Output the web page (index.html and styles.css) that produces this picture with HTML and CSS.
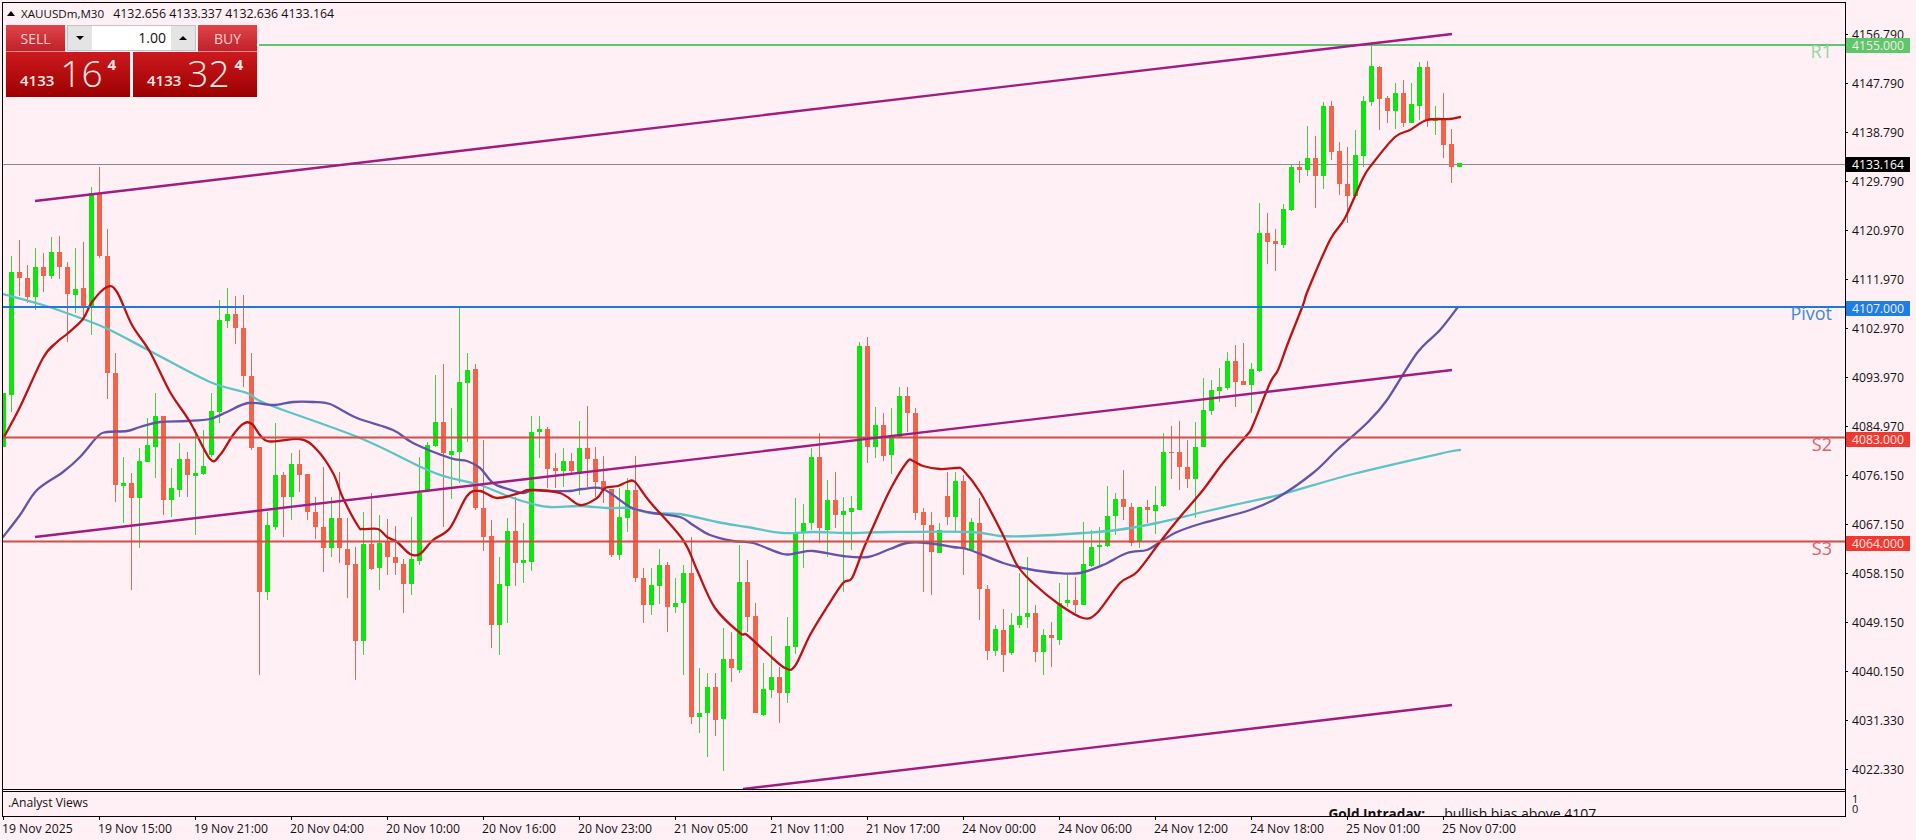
FILE: index.html
```html
<!DOCTYPE html>
<html lang="en">
<head>
  <meta charset="UTF-8">
  <title>XAUUSDm,M30</title>
  <link rel="stylesheet" href="styles.css">
</head>
<body>
  <div class="window">
    <div class="panes">
      <div class="main-pane">
        <svg class="chart" width="1842" height="786" viewBox="3 3 1842 786">
          <line class="level level-last" x1="3" y1="164.5" x2="1845" y2="164.5"/>
          <g id="candles"></g>
          <g id="averages"></g>
          <line class="level level-r1" x1="259" y1="45" x2="1845" y2="45"/>
          <line class="level level-pivot" x1="3" y1="307" x2="1845" y2="307"/>
          <line class="level level-s2" x1="3" y1="437.5" x2="1845" y2="437.5"/>
          <line class="level level-s3" x1="3" y1="541.5" x2="1845" y2="541.5"/>
          <line class="channel" x1="35" y1="201" x2="1452" y2="34"/>
          <line class="channel" x1="35" y1="537" x2="1452" y2="370"/>
          <line class="channel" x1="743" y1="789" x2="1452" y2="705"/>
          <text class="level-name name-r1" x="1832" y="57.5">R1</text>
          <text class="level-name name-pivot" x="1832" y="320">Pivot</text>
          <text class="level-name name-s2" x="1832" y="451">S2</text>
          <text class="level-name name-s3" x="1832" y="555">S3</text>
        </svg>

        <div class="chart-title">
          <span class="title-arrow"></span>
          <span class="title-symbol">XAUUSDm,M30</span>
          <span class="title-prices">4132.656 4133.337 4132.636 4133.164</span>
        </div>

        <div class="trade-panel">
          <div class="trade-top">
            <div class="trade-btn">SELL</div>
            <div class="lot-box">
              <div class="lot-step"><span class="arrow-down"></span></div>
              <div class="lot-value">1.00</div>
              <div class="lot-step"><span class="arrow-up"></span></div>
            </div>
            <div class="trade-btn">BUY</div>
          </div>
          <div class="quotes">
            <div class="quote">
              <span class="quote-base">4133</span>
              <span class="quote-big">16</span>
              <span class="quote-point">4</span>
            </div>
            <div class="quote">
              <span class="quote-base">4133</span>
              <span class="quote-big">32</span>
              <span class="quote-point">4</span>
            </div>
          </div>
        </div>
      </div>

      <div class="sub-pane">
        <div class="sub-name">.Analyst Views</div>
        <div class="headline">
          <span class="headline-title">Gold Intraday:</span>
          <span class="headline-text">bullish bias above 4107.</span>
        </div>
      </div>
    </div>

    <div class="price-axis">
      <div class="tick">4156.790</div>
      <div class="tick">4147.790</div>
      <div class="tick">4138.790</div>
      <div class="tick">4129.790</div>
      <div class="tick">4120.970</div>
      <div class="tick">4111.970</div>
      <div class="tick">4102.970</div>
      <div class="tick">4093.970</div>
      <div class="tick">4084.970</div>
      <div class="tick">4076.150</div>
      <div class="tick">4067.150</div>
      <div class="tick">4058.150</div>
      <div class="tick">4049.150</div>
      <div class="tick">4040.150</div>
      <div class="tick">4031.330</div>
      <div class="tick">4022.330</div>
      <div class="sub-tick">1</div>
      <div class="sub-tick">0</div>

      <div class="price-tag tag-r1">4155.000</div>
      <div class="price-tag tag-last">4133.164</div>
      <div class="price-tag tag-pivot">4107.000</div>
      <div class="price-tag tag-s2">4083.000</div>
      <div class="price-tag tag-s3">4064.000</div>
    </div>
  </div>

  <div class="time-axis">
    <div class="time">19 Nov 2025</div>
    <div class="time">19 Nov 15:00</div>
    <div class="time">19 Nov 21:00</div>
    <div class="time">20 Nov 04:00</div>
    <div class="time">20 Nov 10:00</div>
    <div class="time">20 Nov 16:00</div>
    <div class="time">20 Nov 23:00</div>
    <div class="time">21 Nov 05:00</div>
    <div class="time">21 Nov 11:00</div>
    <div class="time">21 Nov 17:00</div>
    <div class="time">24 Nov 00:00</div>
    <div class="time">24 Nov 06:00</div>
    <div class="time">24 Nov 12:00</div>
    <div class="time">24 Nov 18:00</div>
    <div class="time">25 Nov 01:00</div>
    <div class="time">25 Nov 07:00</div>
  </div>

  <script src="chart.js"></script>
</body>
</html>
```

FILE: styles.css
```css
* {
  margin: 0;
  padding: 0;
  box-sizing: border-box;
}

body {
  width: 1916px;
  height: 840px;
  padding: 2px 0 0 2px;
  overflow: hidden;
  background: #fff0f5;
  color: #111;
  font-family: "Open Sans", "Liberation Sans", sans-serif;
  font-size: 12.2px;
}

.window {
  display: flex;
  height: 815px;
}

.panes {
  width: 1844px;
  height: 815px;
  border-left: 1px solid #000;
  border-right: 1px solid #000;
}

.main-pane {
  position: relative;
  height: 788px;
  border-top: 1px solid #000;
  border-bottom: 1px solid #000;
}

.chart {
  display: block;
}

.wick-up { fill: #3fd13f; }
.wick-down { fill: #d0705c; }
.body-up { fill: #0ce60c; }
.body-down { fill: #f4624a; }

.ma {
  fill: none;
  stroke-linejoin: round;
  stroke-linecap: round;
}

.ma-fast { stroke: #b81414; stroke-width: 2.3; }
.ma-mid { stroke: #6254a8; stroke-width: 2.3; }
.ma-slow { stroke: #5cc4c4; stroke-width: 2.3; }

.level { stroke-width: 2; }
.level-last { stroke: #8a8a8a; stroke-width: 1; }
.level-r1 { stroke: #5fc472; }
.level-pivot { stroke: #1f78d6; }
.level-s2, .level-s3 { stroke: #cc5048; }

.channel {
  stroke: #a01c80;
  stroke-width: 2.4;
}

.level-name {
  font-size: 18px;
  text-anchor: end;
}

.name-r1 { fill: #8ed89c; }
.name-pivot { fill: #3f88d8; }
.name-s2, .name-s3 { fill: #d8626a; }

.chart-title {
  position: absolute;
  top: 1px;
  left: 4px;
  display: flex;
  align-items: center;
  height: 18px;
  white-space: nowrap;
}

.title-arrow {
  width: 0;
  height: 0;
  margin-right: 6px;
  border-left: 4px solid transparent;
  border-right: 4px solid transparent;
  border-bottom: 5px solid #000;
}

.title-symbol {
  margin-right: 9px;
  font-size: 11.6px;
}

.title-prices {
  font-size: 12.4px;
}

.trade-panel {
  position: absolute;
  top: 22px;
  left: 3px;
  width: 251px;
}

.trade-top {
  display: flex;
  justify-content: space-between;
  height: 27px;
}

.trade-btn {
  width: 59px;
  line-height: 27px;
  text-align: center;
  color: #ffd4d4;
  font-size: 14px;
  background: linear-gradient(#e04448, #c0202a);
  border-bottom: 1px solid #e88a8a;
}

.lot-box {
  display: flex;
  width: 129px;
  height: 26px;
  background: #fff;
  border: 1px solid #c4c4c4;
}

.lot-step {
  display: flex;
  align-items: center;
  justify-content: center;
  width: 24px;
  background: #e4e4e4;
}

.lot-value {
  flex: 1;
  padding-right: 5px;
  text-align: right;
  line-height: 24px;
  font-size: 14px;
}

.arrow-down, .arrow-up {
  width: 0;
  height: 0;
  border-left: 4px solid transparent;
  border-right: 4px solid transparent;
}

.arrow-down { border-top: 4px solid #000; }
.arrow-up { border-bottom: 4px solid #000; }

.quotes {
  display: flex;
  justify-content: space-between;
  height: 45px;
}

.quote {
  display: flex;
  align-items: flex-start;
  width: 124px;
  padding-left: 14px;
  color: #ffe8e8;
  background: linear-gradient(#cc1a1e, #9c0000);
}

.quote-base {
  margin-top: 18px;
  font-size: 15px;
  font-weight: 600;
}

.quote-big {
  margin: -2px 0 0 6px;
  font-size: 37px;
  font-weight: 300;
  line-height: 46px;
}

.quote-point {
  margin: 2px 0 0 5px;
  font-size: 15px;
  font-weight: 700;
}

.sub-pane {
  display: flex;
  height: 26px;
  margin-top: 1px;
  overflow: hidden;
  border-top: 1px solid #000;
  border-bottom: 1px solid #000;
}

.sub-name {
  margin-left: 5px;
  line-height: 22px;
}

.headline {
  display: flex;
  gap: 19px;
  margin: 12px 245px 0 auto;
  white-space: nowrap;
}

.headline-title {
  font-size: 13.6px;
  font-weight: 700;
}

.headline-text {
  font-size: 14px;
}

.price-axis {
  position: relative;
  width: 70px;
  padding-top: 8px;
}

.tick {
  display: flex;
  align-items: center;
  height: 49px;
}

.tick::before {
  content: "";
  width: 2px;
  height: 1px;
  margin-right: 4px;
  background: #000;
}

.sub-tick {
  height: 10px;
  padding-left: 6px;
  line-height: 10px;
  font-size: 11px;
}

.price-tag {
  position: absolute;
  left: 0;
  width: 64px;
  height: 15px;
  padding-left: 6px;
  line-height: 15px;
  color: #ffe8e8;
}

.tag-r1 { top: 36px; background: #5cc86c; }
.tag-last { top: 155px; background: #000; color: #fff; }
.tag-pivot { top: 299px; background: #1a80e8; }
.tag-s2 { top: 430px; background: #f03a30; }
.tag-s3 { top: 534px; background: #f03a30; }

.time-axis {
  display: flex;
  white-space: nowrap;
}

.time {
  flex: 0 0 96px;
}

.time::before {
  content: "";
  display: block;
  width: 1px;
  height: 3px;
  margin-left: 1px;
  background: #000;
}
```

FILE: chart.js
```js
// dir (1 up, 0 down), high, body top, body bottom, low - in screen pixels
const candles = [
  [1,393,393,447,447],[1,256,272,395,412],[0,240,272,278,296],[0,265,278,297,303],[1,248,267,297,310],
  [0,253,267,276,292],[1,237,252,276,279],[0,236,252,267,279],[0,262,267,294,342],[1,248,289,295,313],
  [0,242,288,307,317],[1,187,193,307,335],[0,167,193,256,258],[0,229,256,373,399],[0,353,373,485,502],
  [1,457,483,486,523],[0,473,483,498,590],[1,448,461,498,548],[1,418,445,462,462],[1,393,416,447,478],
  [0,416,416,500,515],[1,468,488,500,517],[1,443,459,490,497],[0,452,459,475,497],[1,429,473,476,535],
  [1,430,466,474,475],[1,393,411,455,457],[1,300,320,412,423],[1,288,314,321,328],[0,296,314,328,344],
  [0,295,328,376,387],[0,353,376,448,450],[0,447,447,592,675],[1,512,525,592,600],[1,423,475,527,530],
  [0,472,475,497,537],[1,453,464,497,520],[0,450,464,475,492],[0,474,474,512,520],[0,497,512,527,539],
  [0,467,527,548,572],[1,497,518,548,557],[0,472,518,548,563],[0,518,549,565,598],[0,547,564,641,680],
  [1,512,544,641,655],[0,493,544,569,570],[1,515,543,568,590],[0,519,541,557,575],[0,526,557,563,575],
  [0,559,564,584,613],[1,517,559,584,595],[1,457,493,561,565],[1,442,445,490,492],[1,375,422,446,447],
  [0,364,422,453,527],[1,408,451,455,499],[1,307,382,452,483],[1,353,370,383,442],[0,364,369,508,510],
  [0,440,508,537,551],[0,520,536,625,648],[1,557,584,625,655],[1,518,531,586,623],[0,497,531,563,586],
  [1,523,560,563,583],[1,416,432,562,571],[1,416,429,432,458],[0,427,429,469,488],[0,453,468,471,488],
  [1,448,461,471,487],[0,453,461,471,473],[1,421,448,474,495],[0,406,448,459,487],[0,447,459,482,497],
  [0,456,481,490,503],[0,489,489,555,557],[1,488,517,555,560],[1,478,490,518,532],[0,456,490,578,582],
  [0,568,578,605,623],[1,568,585,605,615],[1,549,565,586,604],[0,562,565,607,632],[1,578,603,607,613],
  [1,565,573,603,675],[0,537,573,717,724],[1,668,713,717,733],[1,673,687,713,757],[0,673,687,720,736],
  [1,628,659,719,771],[0,632,659,668,682],[1,545,582,670,673],[0,560,582,617,632],[0,603,616,713,713],
  [1,663,689,715,716],[1,636,677,690,698],[0,667,677,693,723],[1,617,646,693,703],[1,498,533,647,654],
  [1,504,523,532,568],[1,448,457,523,530],[0,433,457,528,543],[1,480,500,530,557],[0,472,500,515,528],
  [1,497,511,515,592],[1,496,508,512,550],[1,342,346,510,510],[0,337,346,447,463],[1,407,425,447,458],
  [0,413,425,456,461],[1,408,437,455,474],[1,387,396,438,438],[0,387,396,413,432],[0,408,413,513,520],
  [0,508,512,525,592],[0,512,525,552,595],[1,523,530,553,553],[0,472,496,517,525],[1,472,481,517,532],
  [0,475,481,548,575],[1,518,522,550,550],[0,498,523,589,620],[0,585,589,651,660],[1,625,629,651,656],
  [0,609,630,655,672],[1,613,625,653,655],[1,573,616,625,628],[1,557,613,617,628],[0,605,613,652,662],
  [1,629,635,652,675],[0,622,635,638,667],[1,583,603,640,645],[1,575,600,603,607],[0,577,600,605,613],
  [1,522,564,605,605],[1,530,547,566,567],[1,527,545,547,565],[1,486,516,546,547],[1,493,499,516,535],
  [0,470,499,507,520],[0,503,507,543,546],[1,507,507,542,548],[0,500,507,510,523],[1,486,505,511,534],
  [1,433,452,506,507],[0,426,452,453,479],[0,421,452,467,490],[0,440,467,479,488],[1,422,447,479,518],
  [1,378,410,447,447],[1,380,390,411,415],[1,368,387,391,402],[1,352,361,388,390],[0,345,361,382,407],
  [0,343,381,385,385],[1,363,369,385,413],[1,203,233,371,372],[0,213,233,242,264],[0,229,241,244,271],
  [1,204,209,245,248],[1,165,167,210,211],[0,161,167,170,183],[1,126,158,170,176],[0,136,158,176,208],
  [1,102,106,176,189],[0,101,106,152,160],[0,142,151,184,195],[0,147,184,196,223],[1,130,155,196,196],
  [1,96,101,156,167],[1,42,66,102,106],[0,66,67,99,130],[0,96,98,111,123],[1,83,93,111,129],
  [0,80,93,123,127],[1,83,104,123,123],[1,62,67,106,120],[0,61,67,120,127],[1,106,118,121,135],
  [0,93,119,145,158],[0,129,144,167,183],[1,163,163,167,167]
];

const averages = {
  'ma-slow': '3,294 43,305 83,319 110,330 150,351 210,382 247,393 267,404 360,438 423,468 447,477 480,485 510,497 533,504 550,507 580,506 607,508 630,508 650,513 680,514 717,522 747,527 783,533 813,532 847,533 890,532 970,532 1000,536 1030,536 1083,533 1117,530 1157,523 1203,512 1243,503 1283,494 1353,474 1443,453 1460,450',
  'ma-mid': '3,537 20,515 37,490 63,472 80,457 98,436 107,432 127,431 140,427 160,422 187,421 210,419 227,412 248,403 273,405 293,402 313,402 330,404 357,418 393,430 413,443 450,458 467,461 480,468 493,483 508,489 523,493 533,490 547,491 570,491 583,489 603,489 630,507 643,511 653,513 680,517 693,525 710,535 733,541 753,543 783,554 797,553 813,551 843,556 868,557 890,549 907,543 927,543 953,547 970,550 1003,563 1028,569 1057,573 1080,573 1103,565 1127,553 1147,550 1160,542 1177,532 1203,523 1250,510 1277,498 1313,473 1337,450 1367,423 1387,400 1417,353 1440,330 1458,307',
  'ma-fast': '4,437 20,407 43,358 57,342 67,334 83,319 92,302 107,287 117,292 132,325 150,352 170,392 190,422 210,459 220,455 233,435 243,424 252,424 267,441 300,439 317,450 333,473 343,498 358,526 363,529 378,529 387,537 397,542 410,554 420,554 433,540 450,528 467,496 480,491 497,498 520,493 530,490 560,493 580,505 597,498 605,488 618,486 627,482 635,482 650,502 683,540 697,570 715,608 740,633 747,635 767,653 785,668 795,666 810,635 827,607 843,583 852,578 863,550 873,527 890,490 907,462 913,461 923,466 940,469 957,468 963,470 980,492 1002,533 1017,565 1033,583 1060,605 1083,618 1097,613 1120,583 1137,572 1160,542 1180,517 1203,490 1223,463 1247,435 1253,425 1270,383 1278,370 1288,343 1303,305 1308,290 1330,240 1345,218 1363,178 1373,163 1395,137 1410,130 1427,120 1450,119 1460,117'
};

const svgNs = 'http://www.w3.org/2000/svg';

function addRect(parent, cls, x, y, w, h) {
  const r = document.createElementNS(svgNs, 'rect');
  r.setAttribute('class', cls);
  r.setAttribute('x', x);
  r.setAttribute('y', y);
  r.setAttribute('width', w);
  r.setAttribute('height', h);
  parent.appendChild(r);
}

// catmull-rom through the points, so the averages don't look like straight segments
function smoothPath(points) {
  const p = points.split(' ').map((s) => s.split(',').map(Number));
  let d = 'M' + p[0].join(' ');
  for (let i = 0; i < p.length - 1; i++) {
    const a = p[Math.max(i - 1, 0)];
    const b = p[i];
    const c = p[i + 1];
    const e = p[Math.min(i + 2, p.length - 1)];
    const c1 = [b[0] + (c[0] - a[0]) / 6, b[1] + (c[1] - a[1]) / 6];
    const c2 = [c[0] - (e[0] - b[0]) / 6, c[1] - (e[1] - b[1]) / 6];
    d += ' C' + c1.join(' ') + ' ' + c2.join(' ') + ' ' + c.join(' ');
  }
  return d;
}

const candleGroup = document.getElementById('candles');
candles.forEach((c, i) => {
  const kind = c[0] ? 'up' : 'down';
  addRect(candleGroup, 'wick-' + kind, 3 + 8 * i, c[1], 1, c[4] - c[1]);
  addRect(candleGroup, 'body-' + kind, 1 + 8 * i, c[2], 5, c[3] - c[2]);
});

const averageGroup = document.getElementById('averages');
Object.keys(averages).forEach((name) => {
  const line = document.createElementNS(svgNs, 'path');
  line.setAttribute('class', 'ma ' + name);
  line.setAttribute('d', smoothPath(averages[name]));
  averageGroup.appendChild(line);
});
```
